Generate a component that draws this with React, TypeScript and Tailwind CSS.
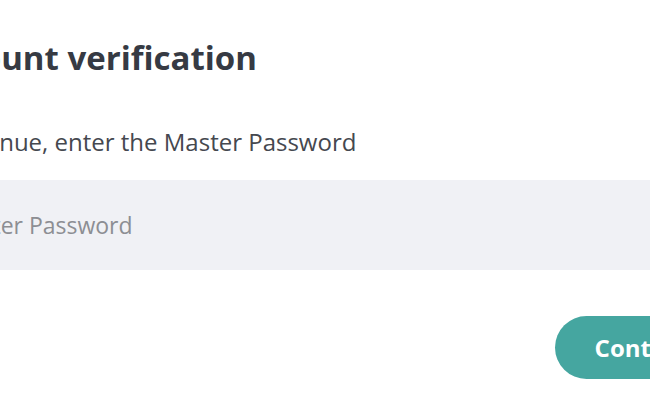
import React from "react";

export default function App() {
  return (
    <div className="w-[650px] h-[400px] overflow-hidden bg-white" style={{ fontFamily: '"Open Sans", "Noto Sans", sans-serif' }}>
      <div className="ml-[-90px] w-[834px] shrink-0 flex flex-col pt-[34px]">
        <h1 className="ml-[14px] text-[33px] leading-[48px] font-bold text-[#363a43] whitespace-nowrap">Account verification</h1>
        <p className="mt-[44px] text-[24px] leading-[32px] text-[#45484f] whitespace-nowrap">To continue, enter the Master Password</p>
        <input
          className="mt-[22px] h-[90px] w-full bg-[#f0f1f5] pl-[38px] pr-[24px] text-[23px] outline-none placeholder:text-[#8c8e93]"
          placeholder="Master Password"
        />
        <div className="flex justify-end mt-[46px]">
          <button className="h-[63px] rounded-full bg-[#45a6a0] px-[40px] text-[24px] font-bold text-white whitespace-nowrap">Continue</button>
        </div>
      </div>
    </div>
  );
}
